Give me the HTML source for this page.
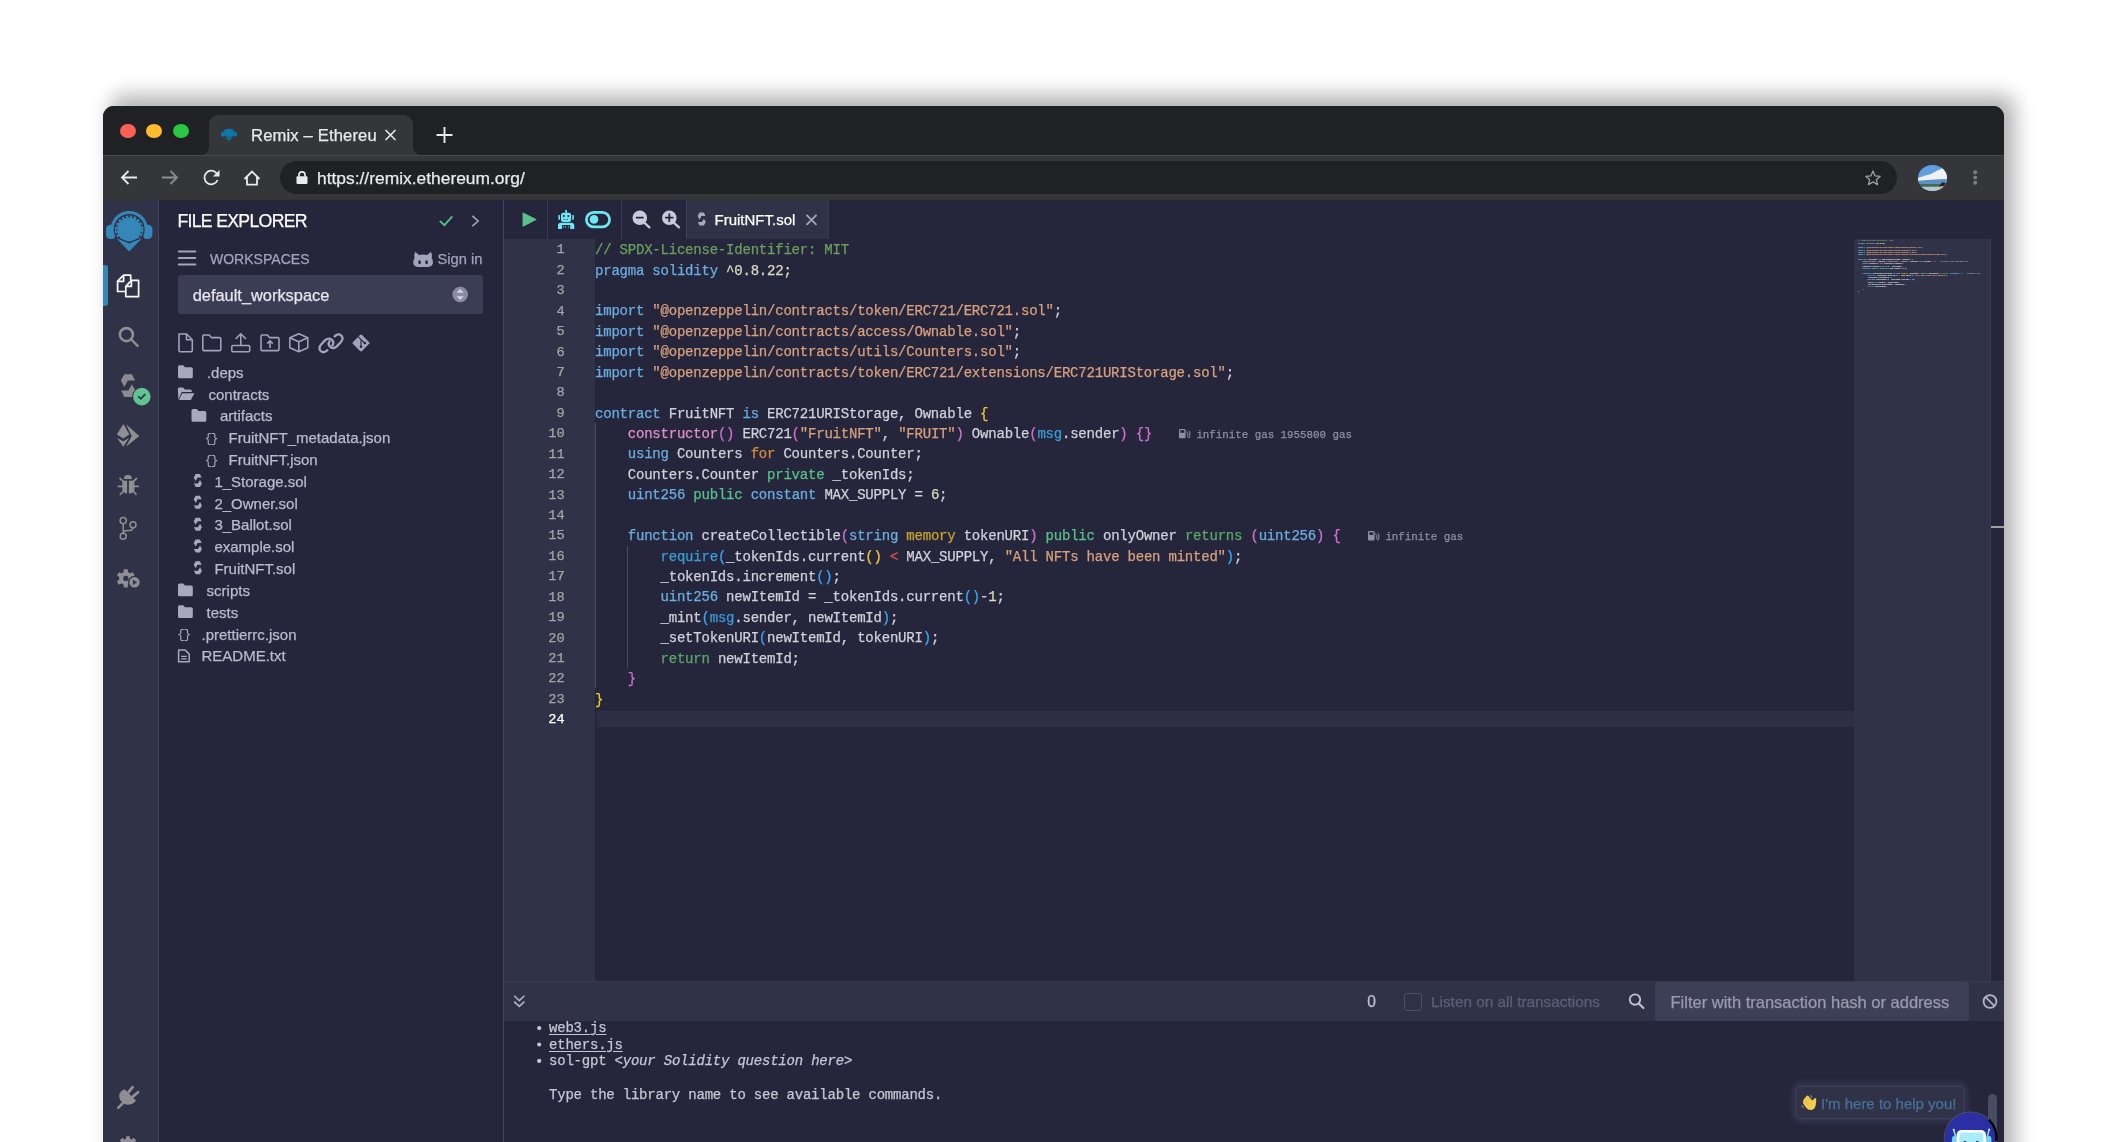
<!DOCTYPE html>
<html><head><meta charset="utf-8">
<style>
*{box-sizing:border-box;margin:0;padding:0}
html,body{width:2108px;height:1142px;overflow:hidden;background:#fff;font-family:'Liberation Sans',sans-serif}
.abs{position:absolute}
#win{position:absolute;left:103px;top:106px;width:1901px;height:1100px;border-radius:11px 11px 0 0;background:#202124;box-shadow:9.4px -10px 20px 0.9px rgba(0,0,0,0.30);overflow:hidden}
#pg{position:absolute;left:-103px;top:-106px;width:2108px;height:1250px;will-change:transform}
.t{position:absolute;white-space:pre;line-height:1;-webkit-text-stroke:0.25px currentColor}
svg.ov{position:absolute;left:0;top:0}
</style></head>
<body>
<div id="win"><div id="pg">
<div class="abs" style="left:103px;top:106px;width:1901px;height:49px;background:#202124;"></div>
<div class="abs" style="left:120px;top:123.99999999999999px;width:16px;height:14.4px;border-radius:50%;background:#fe5f57"></div>
<div class="abs" style="left:146.3px;top:123.99999999999999px;width:16px;height:14.4px;border-radius:50%;background:#febc2e"></div>
<div class="abs" style="left:172.8px;top:123.99999999999999px;width:16px;height:14.4px;border-radius:50%;background:#28c840"></div>
<div class="abs" style="left:209px;top:115px;width:204px;height:41px;background:#35363a;border-radius:9px 9px 0 0"></div>
<div class="abs" style="left:201px;top:147px;width:8px;height:8px;background:radial-gradient(circle at 0 0,#202124 7.5px,#35363a 8.2px);"></div>
<div class="abs" style="left:413px;top:147px;width:8px;height:8px;background:radial-gradient(circle at 100% 0,#202124 7.5px,#35363a 8.2px);"></div>
<div class="abs" style="left:103px;top:155px;width:1901px;height:1px;background:#47484c;"></div>
<div class="abs" style="left:103px;top:156px;width:1901px;height:44px;background:#35363a;"></div>
<div class="abs" style="left:280px;top:161px;width:1617px;height:33px;background:#202124;border-radius:17px"></div>
<div class="t" style="left:251.00px;top:127.94px;font-size:16.6px;color:#e8eaed;font-family:'Liberation Sans',sans-serif;letter-spacing:0.15px">Remix – Ethereu</div>
<div class="t" style="left:317.00px;top:169.57px;font-size:17.4px;color:#e8eaed;font-family:'Liberation Sans',sans-serif;">https://remix.ethereum.org/</div>
<div class="abs" style="left:1918px;top:164.6px;width:29.2px;height:26.4px;border-radius:50%;overflow:hidden"><svg width="29.2" height="26.4" viewBox="1918 164.6 29.2 26.4" style="display:block">
 <rect x="1917" y="164" width="31" height="28" fill="#5f9fe0"/>
 <path d="M1917 178 Q1924 175 1931 173.5 Q1937 170 1943 167.5 L1948 168 V181 H1917 Z" fill="#eef0f6"/>
 <path d="M1917 180.5 Q1930 179 1948 178.5 V185 H1917 Z" fill="#5f8ec4"/>
 <path d="M1917 183.5 H1948 V186.6 H1917 Z" fill="#3f6d52"/>
 <path d="M1917 186.4 H1948 V192 H1917 Z" fill="#b9c6d8"/>
 <path d="M1937 192 L1939.5 186 Q1942 183 1945 184 L1948 192 Z" fill="#d9a582"/>
 <path d="M1939 186 L1942 181.8 L1946 182.6 L1944 185.5 Z" fill="#222228"/>
</svg></div>
<div class="abs" style="left:103px;top:200px;width:55px;height:1000px;background:#303248;"></div>
<div class="abs" style="left:158px;top:200px;width:1px;height:1000px;background:#41435a;"></div>
<div class="abs" style="left:159px;top:200px;width:344px;height:1000px;background:#25263c;"></div>
<div class="abs" style="left:503px;top:200px;width:1px;height:1000px;background:#43455c;"></div>
<div class="abs" style="left:504px;top:200px;width:1500px;height:1000px;background:#25263c;"></div>
<div class="abs" style="left:504px;top:239px;width:91px;height:742px;background:#303248;"></div>
<div class="abs" style="left:504px;top:981px;width:1500px;height:40px;background:#303248;"></div>
<div class="abs" style="left:103px;top:265px;width:5px;height:41px;background:#3587b8;border-radius:0 3px 3px 0"></div>
<div class="t" style="left:177.40px;top:212.61px;font-size:17.7px;color:#ffffff;font-family:'Liberation Sans',sans-serif;letter-spacing:-0.7px">FILE EXPLORER</div>
<div class="t" style="left:209.90px;top:251.90px;font-size:14.05px;color:#a2a3bd;font-family:'Liberation Sans',sans-serif;">WORKSPACES</div>
<div class="t" style="left:437.50px;top:251.95px;font-size:14.7px;color:#a2a3bd;font-family:'Liberation Sans',sans-serif;">Sign in</div>
<div class="abs" style="left:178px;top:275px;width:305px;height:39px;background:#3b3d54;border-radius:3px"></div>
<div class="t" style="left:192.70px;top:286.51px;font-size:16.4px;color:#e6e6ef;font-family:'Liberation Sans',sans-serif;">default_workspace</div>
<div class="t" style="left:206.90px;top:364.80px;font-size:15px;color:#babbcc;font-family:'Liberation Sans',sans-serif;">.deps</div>
<div class="t" style="left:208.50px;top:386.61px;font-size:15px;color:#babbcc;font-family:'Liberation Sans',sans-serif;">contracts</div>
<div class="t" style="left:220.00px;top:408.42px;font-size:15px;color:#babbcc;font-family:'Liberation Sans',sans-serif;">artifacts</div>
<div class="t" style="left:228.50px;top:430.23px;font-size:15px;color:#babbcc;font-family:'Liberation Sans',sans-serif;">FruitNFT_metadata.json</div>
<div class="t" style="left:228.50px;top:452.04px;font-size:15px;color:#babbcc;font-family:'Liberation Sans',sans-serif;">FruitNFT.json</div>
<div class="t" style="left:214.40px;top:473.85px;font-size:15px;color:#babbcc;font-family:'Liberation Sans',sans-serif;">1_Storage.sol</div>
<div class="t" style="left:214.40px;top:495.66px;font-size:15px;color:#babbcc;font-family:'Liberation Sans',sans-serif;">2_Owner.sol</div>
<div class="t" style="left:214.40px;top:517.47px;font-size:15px;color:#babbcc;font-family:'Liberation Sans',sans-serif;">3_Ballot.sol</div>
<div class="t" style="left:214.40px;top:539.28px;font-size:15px;color:#babbcc;font-family:'Liberation Sans',sans-serif;">example.sol</div>
<div class="t" style="left:214.40px;top:561.09px;font-size:15px;color:#babbcc;font-family:'Liberation Sans',sans-serif;">FruitNFT.sol</div>
<div class="t" style="left:206.60px;top:582.90px;font-size:15px;color:#babbcc;font-family:'Liberation Sans',sans-serif;">scripts</div>
<div class="t" style="left:206.60px;top:604.71px;font-size:15px;color:#babbcc;font-family:'Liberation Sans',sans-serif;">tests</div>
<div class="t" style="left:201.50px;top:626.52px;font-size:15px;color:#babbcc;font-family:'Liberation Sans',sans-serif;">.prettierrc.json</div>
<div class="t" style="left:201.50px;top:648.33px;font-size:15px;color:#babbcc;font-family:'Liberation Sans',sans-serif;">README.txt</div>
<div class="abs" style="left:547px;top:200px;width:1px;height:39px;background:#383a50;"></div>
<div class="abs" style="left:621px;top:200px;width:1px;height:39px;background:#383a50;"></div>
<div class="abs" style="left:686px;top:200px;width:142px;height:39px;background:#303248;"></div>
<div class="abs" style="left:686px;top:200px;width:1px;height:39px;background:#3e4057;"></div>
<div class="abs" style="left:828px;top:200px;width:1px;height:39px;background:#3a3c52;"></div>
<div class="t" style="left:714.50px;top:212.40px;font-size:15px;color:#ffffff;font-family:'Liberation Sans',sans-serif;">FruitNFT.sol</div>
<div class="abs" style="left:596.6px;top:710.8px;width:1257px;height:16.2px;background:#2e2f45;"></div>
<div class="abs" style="left:594.8px;top:423px;width:1px;height:265px;background:#4a4b55;"></div>
<div class="abs" style="left:627.2px;top:546px;width:1px;height:121.5px;background:#4a4b55;"></div>
<div class="t" style="left:556.41px;top:243.46px;font-size:13.63px;color:#a4a4aa;font-family:'Liberation Mono',monospace;letter-spacing:0px">1</div>
<div class="t" style="left:595.00px;top:243.17px;font-size:14px;color:#d0d1dc;font-family:'Liberation Mono',monospace;letter-spacing:-0.21px"><span style="color:#6ba05b">// SPDX-License-Identifier: MIT</span></div>
<div class="t" style="left:556.41px;top:263.89px;font-size:13.63px;color:#a4a4aa;font-family:'Liberation Mono',monospace;letter-spacing:0px">2</div>
<div class="t" style="left:595.00px;top:263.60px;font-size:14px;color:#d0d1dc;font-family:'Liberation Mono',monospace;letter-spacing:-0.21px"><span style="color:#6aaee0">pragma</span><span style="color:#d0d1dc"> </span><span style="color:#6aaee0">solidity</span><span style="color:#dcdcc0"> ^0.8.22;</span></div>
<div class="t" style="left:556.41px;top:284.32px;font-size:13.63px;color:#a4a4aa;font-family:'Liberation Mono',monospace;letter-spacing:0px">3</div>
<div class="t" style="left:556.41px;top:304.75px;font-size:13.63px;color:#a4a4aa;font-family:'Liberation Mono',monospace;letter-spacing:0px">4</div>
<div class="t" style="left:595.00px;top:304.46px;font-size:14px;color:#d0d1dc;font-family:'Liberation Mono',monospace;letter-spacing:-0.21px"><span style="color:#6aaee0">import</span><span style="color:#d0d1dc"> </span><span style="color:#d8a07e">&quot;@openzeppelin/contracts/token/ERC721/ERC721.sol&quot;</span><span style="color:#d0d1dc">;</span></div>
<div class="t" style="left:556.41px;top:325.18px;font-size:13.63px;color:#a4a4aa;font-family:'Liberation Mono',monospace;letter-spacing:0px">5</div>
<div class="t" style="left:595.00px;top:324.89px;font-size:14px;color:#d0d1dc;font-family:'Liberation Mono',monospace;letter-spacing:-0.21px"><span style="color:#6aaee0">import</span><span style="color:#d0d1dc"> </span><span style="color:#d8a07e">&quot;@openzeppelin/contracts/access/Ownable.sol&quot;</span><span style="color:#d0d1dc">;</span></div>
<div class="t" style="left:556.41px;top:345.61px;font-size:13.63px;color:#a4a4aa;font-family:'Liberation Mono',monospace;letter-spacing:0px">6</div>
<div class="t" style="left:595.00px;top:345.32px;font-size:14px;color:#d0d1dc;font-family:'Liberation Mono',monospace;letter-spacing:-0.21px"><span style="color:#6aaee0">import</span><span style="color:#d0d1dc"> </span><span style="color:#d8a07e">&quot;@openzeppelin/contracts/utils/Counters.sol&quot;</span><span style="color:#d0d1dc">;</span></div>
<div class="t" style="left:556.41px;top:366.04px;font-size:13.63px;color:#a4a4aa;font-family:'Liberation Mono',monospace;letter-spacing:0px">7</div>
<div class="t" style="left:595.00px;top:365.75px;font-size:14px;color:#d0d1dc;font-family:'Liberation Mono',monospace;letter-spacing:-0.21px"><span style="color:#6aaee0">import</span><span style="color:#d0d1dc"> </span><span style="color:#d8a07e">&quot;@openzeppelin/contracts/token/ERC721/extensions/ERC721URIStorage.sol&quot;</span><span style="color:#d0d1dc">;</span></div>
<div class="t" style="left:556.41px;top:386.47px;font-size:13.63px;color:#a4a4aa;font-family:'Liberation Mono',monospace;letter-spacing:0px">8</div>
<div class="t" style="left:556.41px;top:406.90px;font-size:13.63px;color:#a4a4aa;font-family:'Liberation Mono',monospace;letter-spacing:0px">9</div>
<div class="t" style="left:595.00px;top:406.61px;font-size:14px;color:#d0d1dc;font-family:'Liberation Mono',monospace;letter-spacing:-0.21px"><span style="color:#6aaee0">contract</span><span style="color:#d0d1dc"> FruitNFT </span><span style="color:#6aaee0">is</span><span style="color:#d0d1dc"> ERC721URIStorage, Ownable </span><span style="color:#f0c830">{</span></div>
<div class="t" style="left:548.22px;top:427.33px;font-size:13.63px;color:#a4a4aa;font-family:'Liberation Mono',monospace;letter-spacing:0px">10</div>
<div class="t" style="left:595.00px;top:427.04px;font-size:14px;color:#d0d1dc;font-family:'Liberation Mono',monospace;letter-spacing:-0.21px"><span style="color:#d0d1dc">    </span><span style="color:#e08fc8">constructor</span><span style="color:#d070d0">()</span><span style="color:#d0d1dc"> ERC721</span><span style="color:#d070d0">(</span><span style="color:#d8a07e">&quot;FruitNFT&quot;</span><span style="color:#d0d1dc">, </span><span style="color:#d8a07e">&quot;FRUIT&quot;</span><span style="color:#d070d0">)</span><span style="color:#d0d1dc"> Ownable</span><span style="color:#d070d0">(</span><span style="color:#3b9dd6">msg</span><span style="color:#d0d1dc">.sender</span><span style="color:#d070d0">)</span><span style="color:#d0d1dc"> </span><span style="color:#d070d0">{}</span></div>
<div class="t" style="left:548.22px;top:447.76px;font-size:13.63px;color:#a4a4aa;font-family:'Liberation Mono',monospace;letter-spacing:0px">11</div>
<div class="t" style="left:595.00px;top:447.47px;font-size:14px;color:#d0d1dc;font-family:'Liberation Mono',monospace;letter-spacing:-0.21px"><span style="color:#d0d1dc">    </span><span style="color:#6aaee0">using</span><span style="color:#d0d1dc"> Counters </span><span style="color:#d98a3c">for</span><span style="color:#d0d1dc"> Counters.Counter;</span></div>
<div class="t" style="left:548.22px;top:468.19px;font-size:13.63px;color:#a4a4aa;font-family:'Liberation Mono',monospace;letter-spacing:0px">12</div>
<div class="t" style="left:595.00px;top:467.90px;font-size:14px;color:#d0d1dc;font-family:'Liberation Mono',monospace;letter-spacing:-0.21px"><span style="color:#d0d1dc">    Counters.Counter </span><span style="color:#58c08a">private</span><span style="color:#d0d1dc"> _tokenIds;</span></div>
<div class="t" style="left:548.22px;top:488.62px;font-size:13.63px;color:#a4a4aa;font-family:'Liberation Mono',monospace;letter-spacing:0px">13</div>
<div class="t" style="left:595.00px;top:488.33px;font-size:14px;color:#d0d1dc;font-family:'Liberation Mono',monospace;letter-spacing:-0.21px"><span style="color:#d0d1dc">    </span><span style="color:#6aaee0">uint256</span><span style="color:#d0d1dc"> </span><span style="color:#58c08a">public</span><span style="color:#d0d1dc"> </span><span style="color:#6aaee0">constant</span><span style="color:#d0d1dc"> MAX_SUPPLY = </span><span style="color:#dcdcc0">6</span><span style="color:#d0d1dc">;</span></div>
<div class="t" style="left:548.22px;top:509.05px;font-size:13.63px;color:#a4a4aa;font-family:'Liberation Mono',monospace;letter-spacing:0px">14</div>
<div class="t" style="left:548.22px;top:529.48px;font-size:13.63px;color:#a4a4aa;font-family:'Liberation Mono',monospace;letter-spacing:0px">15</div>
<div class="t" style="left:595.00px;top:529.19px;font-size:14px;color:#d0d1dc;font-family:'Liberation Mono',monospace;letter-spacing:-0.21px"><span style="color:#d0d1dc">    </span><span style="color:#6aaee0">function</span><span style="color:#d0d1dc"> createCollectible</span><span style="color:#d070d0">(</span><span style="color:#6aaee0">string</span><span style="color:#d0d1dc"> </span><span style="color:#c9a42c">memory</span><span style="color:#d0d1dc"> tokenURI</span><span style="color:#d070d0">)</span><span style="color:#d0d1dc"> </span><span style="color:#58c08a">public</span><span style="color:#d0d1dc"> onlyOwner </span><span style="color:#5aa86a">returns</span><span style="color:#d0d1dc"> </span><span style="color:#d070d0">(</span><span style="color:#6aaee0">uint256</span><span style="color:#d070d0">)</span><span style="color:#d0d1dc"> </span><span style="color:#d070d0">{</span></div>
<div class="t" style="left:548.22px;top:549.91px;font-size:13.63px;color:#a4a4aa;font-family:'Liberation Mono',monospace;letter-spacing:0px">16</div>
<div class="t" style="left:595.00px;top:549.62px;font-size:14px;color:#d0d1dc;font-family:'Liberation Mono',monospace;letter-spacing:-0.21px"><span style="color:#d0d1dc">        </span><span style="color:#3b9dd6">require</span><span style="color:#3ea4f0">(</span><span style="color:#d0d1dc">_tokenIds.current</span><span style="color:#f0c830">()</span><span style="color:#d0d1dc"> </span><span style="color:#e05040">&lt;</span><span style="color:#d0d1dc"> MAX_SUPPLY, </span><span style="color:#d8a07e">&quot;All NFTs have been minted&quot;</span><span style="color:#3ea4f0">)</span><span style="color:#d0d1dc">;</span></div>
<div class="t" style="left:548.22px;top:570.34px;font-size:13.63px;color:#a4a4aa;font-family:'Liberation Mono',monospace;letter-spacing:0px">17</div>
<div class="t" style="left:595.00px;top:570.05px;font-size:14px;color:#d0d1dc;font-family:'Liberation Mono',monospace;letter-spacing:-0.21px"><span style="color:#d0d1dc">        _tokenIds.increment</span><span style="color:#3ea4f0">()</span><span style="color:#d0d1dc">;</span></div>
<div class="t" style="left:548.22px;top:590.77px;font-size:13.63px;color:#a4a4aa;font-family:'Liberation Mono',monospace;letter-spacing:0px">18</div>
<div class="t" style="left:595.00px;top:590.48px;font-size:14px;color:#d0d1dc;font-family:'Liberation Mono',monospace;letter-spacing:-0.21px"><span style="color:#d0d1dc">        </span><span style="color:#6aaee0">uint256</span><span style="color:#d0d1dc"> newItemId = _tokenIds.current</span><span style="color:#3ea4f0">()</span><span style="color:#d0d1dc">-</span><span style="color:#dcdcc0">1</span><span style="color:#d0d1dc">;</span></div>
<div class="t" style="left:548.22px;top:611.20px;font-size:13.63px;color:#a4a4aa;font-family:'Liberation Mono',monospace;letter-spacing:0px">19</div>
<div class="t" style="left:595.00px;top:610.91px;font-size:14px;color:#d0d1dc;font-family:'Liberation Mono',monospace;letter-spacing:-0.21px"><span style="color:#d0d1dc">        _mint</span><span style="color:#3ea4f0">(</span><span style="color:#3b9dd6">msg</span><span style="color:#d0d1dc">.sender, newItemId</span><span style="color:#3ea4f0">)</span><span style="color:#d0d1dc">;</span></div>
<div class="t" style="left:548.22px;top:631.63px;font-size:13.63px;color:#a4a4aa;font-family:'Liberation Mono',monospace;letter-spacing:0px">20</div>
<div class="t" style="left:595.00px;top:631.34px;font-size:14px;color:#d0d1dc;font-family:'Liberation Mono',monospace;letter-spacing:-0.21px"><span style="color:#d0d1dc">        _setTokenURI</span><span style="color:#3ea4f0">(</span><span style="color:#d0d1dc">newItemId, tokenURI</span><span style="color:#3ea4f0">)</span><span style="color:#d0d1dc">;</span></div>
<div class="t" style="left:548.22px;top:652.06px;font-size:13.63px;color:#a4a4aa;font-family:'Liberation Mono',monospace;letter-spacing:0px">21</div>
<div class="t" style="left:595.00px;top:651.77px;font-size:14px;color:#d0d1dc;font-family:'Liberation Mono',monospace;letter-spacing:-0.21px"><span style="color:#d0d1dc">        </span><span style="color:#5aa86a">return</span><span style="color:#d0d1dc"> newItemId;</span></div>
<div class="t" style="left:548.22px;top:672.49px;font-size:13.63px;color:#a4a4aa;font-family:'Liberation Mono',monospace;letter-spacing:0px">22</div>
<div class="t" style="left:595.00px;top:672.20px;font-size:14px;color:#d0d1dc;font-family:'Liberation Mono',monospace;letter-spacing:-0.21px"><span style="color:#d0d1dc">    </span><span style="color:#d070d0">}</span></div>
<div class="t" style="left:548.22px;top:692.92px;font-size:13.63px;color:#a4a4aa;font-family:'Liberation Mono',monospace;letter-spacing:0px">23</div>
<div class="t" style="left:595.00px;top:692.63px;font-size:14px;color:#d0d1dc;font-family:'Liberation Mono',monospace;letter-spacing:-0.21px"><span style="color:#f0c830">}</span></div>
<div class="t" style="left:548.22px;top:713.35px;font-size:13.63px;color:#ffffff;font-family:'Liberation Mono',monospace;letter-spacing:0px">24</div>
<div class="t" style="left:1196.40px;top:429.50px;font-size:10.8px;color:#8e8fa6;font-family:'Liberation Mono',monospace;">infinite gas 1955800 gas</div>
<div class="t" style="left:1385.40px;top:531.65px;font-size:10.8px;color:#8e8fa6;font-family:'Liberation Mono',monospace;">infinite gas</div>
<div class="abs" style="left:1854px;top:239px;width:137px;height:742px;background:#303248;"></div>
<div class="abs" style="left:1990px;top:239px;width:1px;height:742px;background:#383a50;"></div>
<div class="abs" style="left:1991px;top:526px;width:13px;height:2px;background:#a0a0a0;"></div>
<div class="abs" style="left:1858px;top:239.5px;transform:scale(0.13919,0.11209);transform-origin:0 0;font-family:'Liberation Mono',monospace;font-size:13.68px;line-height:20.43px;font-weight:bold;-webkit-text-stroke:0.6px currentColor"><div style="height:20.43px;white-space:pre"><span style="color:#6ba05b">// SPDX-License-Identifier: MIT</span></div><div style="height:20.43px;white-space:pre"><span style="color:#6aaee0">pragma</span><span style="color:#d0d1dc"> </span><span style="color:#6aaee0">solidity</span><span style="color:#dcdcc0"> ^0.8.22;</span></div><div style="height:20.43px;white-space:pre"> </div><div style="height:20.43px;white-space:pre"><span style="color:#6aaee0">import</span><span style="color:#d0d1dc"> </span><span style="color:#d8a07e">&quot;@openzeppelin/contracts/token/ERC721/ERC721.sol&quot;</span><span style="color:#d0d1dc">;</span></div><div style="height:20.43px;white-space:pre"><span style="color:#6aaee0">import</span><span style="color:#d0d1dc"> </span><span style="color:#d8a07e">&quot;@openzeppelin/contracts/access/Ownable.sol&quot;</span><span style="color:#d0d1dc">;</span></div><div style="height:20.43px;white-space:pre"><span style="color:#6aaee0">import</span><span style="color:#d0d1dc"> </span><span style="color:#d8a07e">&quot;@openzeppelin/contracts/utils/Counters.sol&quot;</span><span style="color:#d0d1dc">;</span></div><div style="height:20.43px;white-space:pre"><span style="color:#6aaee0">import</span><span style="color:#d0d1dc"> </span><span style="color:#d8a07e">&quot;@openzeppelin/contracts/token/ERC721/extensions/ERC721URIStorage.sol&quot;</span><span style="color:#d0d1dc">;</span></div><div style="height:20.43px;white-space:pre"> </div><div style="height:20.43px;white-space:pre"><span style="color:#6aaee0">contract</span><span style="color:#d0d1dc"> FruitNFT </span><span style="color:#6aaee0">is</span><span style="color:#d0d1dc"> ERC721URIStorage, Ownable </span><span style="color:#f0c830">{</span></div><div style="height:20.43px;white-space:pre"><span style="color:#d0d1dc">    </span><span style="color:#e08fc8">constructor</span><span style="color:#d070d0">()</span><span style="color:#d0d1dc"> ERC721</span><span style="color:#d070d0">(</span><span style="color:#d8a07e">&quot;FruitNFT&quot;</span><span style="color:#d0d1dc">, </span><span style="color:#d8a07e">&quot;FRUIT&quot;</span><span style="color:#d070d0">)</span><span style="color:#d0d1dc"> Ownable</span><span style="color:#d070d0">(</span><span style="color:#3b9dd6">msg</span><span style="color:#d0d1dc">.sender</span><span style="color:#d070d0">)</span><span style="color:#d0d1dc"> </span><span style="color:#d070d0">{}</span><span style="color:#8e8fa6">    infinite gas 1955800 gas</span></div><div style="height:20.43px;white-space:pre"><span style="color:#d0d1dc">    </span><span style="color:#6aaee0">using</span><span style="color:#d0d1dc"> Counters </span><span style="color:#d98a3c">for</span><span style="color:#d0d1dc"> Counters.Counter;</span></div><div style="height:20.43px;white-space:pre"><span style="color:#d0d1dc">    Counters.Counter </span><span style="color:#58c08a">private</span><span style="color:#d0d1dc"> _tokenIds;</span></div><div style="height:20.43px;white-space:pre"><span style="color:#d0d1dc">    </span><span style="color:#6aaee0">uint256</span><span style="color:#d0d1dc"> </span><span style="color:#58c08a">public</span><span style="color:#d0d1dc"> </span><span style="color:#6aaee0">constant</span><span style="color:#d0d1dc"> MAX_SUPPLY = </span><span style="color:#dcdcc0">6</span><span style="color:#d0d1dc">;</span></div><div style="height:20.43px;white-space:pre"> </div><div style="height:20.43px;white-space:pre"><span style="color:#d0d1dc">    </span><span style="color:#6aaee0">function</span><span style="color:#d0d1dc"> createCollectible</span><span style="color:#d070d0">(</span><span style="color:#6aaee0">string</span><span style="color:#d0d1dc"> </span><span style="color:#c9a42c">memory</span><span style="color:#d0d1dc"> tokenURI</span><span style="color:#d070d0">)</span><span style="color:#d0d1dc"> </span><span style="color:#58c08a">public</span><span style="color:#d0d1dc"> onlyOwner </span><span style="color:#5aa86a">returns</span><span style="color:#d0d1dc"> </span><span style="color:#d070d0">(</span><span style="color:#6aaee0">uint256</span><span style="color:#d070d0">)</span><span style="color:#d0d1dc"> </span><span style="color:#d070d0">{</span><span style="color:#8e8fa6">    infinite gas</span></div><div style="height:20.43px;white-space:pre"><span style="color:#d0d1dc">        </span><span style="color:#3b9dd6">require</span><span style="color:#3ea4f0">(</span><span style="color:#d0d1dc">_tokenIds.current</span><span style="color:#f0c830">()</span><span style="color:#d0d1dc"> </span><span style="color:#e05040">&lt;</span><span style="color:#d0d1dc"> MAX_SUPPLY, </span><span style="color:#d8a07e">&quot;All NFTs have been minted&quot;</span><span style="color:#3ea4f0">)</span><span style="color:#d0d1dc">;</span></div><div style="height:20.43px;white-space:pre"><span style="color:#d0d1dc">        _tokenIds.increment</span><span style="color:#3ea4f0">()</span><span style="color:#d0d1dc">;</span></div><div style="height:20.43px;white-space:pre"><span style="color:#d0d1dc">        </span><span style="color:#6aaee0">uint256</span><span style="color:#d0d1dc"> newItemId = _tokenIds.current</span><span style="color:#3ea4f0">()</span><span style="color:#d0d1dc">-</span><span style="color:#dcdcc0">1</span><span style="color:#d0d1dc">;</span></div><div style="height:20.43px;white-space:pre"><span style="color:#d0d1dc">        _mint</span><span style="color:#3ea4f0">(</span><span style="color:#3b9dd6">msg</span><span style="color:#d0d1dc">.sender, newItemId</span><span style="color:#3ea4f0">)</span><span style="color:#d0d1dc">;</span></div><div style="height:20.43px;white-space:pre"><span style="color:#d0d1dc">        _setTokenURI</span><span style="color:#3ea4f0">(</span><span style="color:#d0d1dc">newItemId, tokenURI</span><span style="color:#3ea4f0">)</span><span style="color:#d0d1dc">;</span></div><div style="height:20.43px;white-space:pre"><span style="color:#d0d1dc">        </span><span style="color:#5aa86a">return</span><span style="color:#d0d1dc"> newItemId;</span></div><div style="height:20.43px;white-space:pre"><span style="color:#d0d1dc">    </span><span style="color:#d070d0">}</span></div><div style="height:20.43px;white-space:pre"><span style="color:#f0c830">}</span></div></div>
<div class="abs" style="left:504px;top:981px;width:1500px;height:1px;background:#383a51;"></div>
<div class="t" style="left:1367.20px;top:994.39px;font-size:15.6px;color:#c0c1d2;font-family:'Liberation Sans',sans-serif;">0</div>
<div class="abs" style="left:1403.5px;top:993px;width:18.5px;height:18px;background:#2f3147;border:1.5px solid #4d4f66;border-radius:3px"></div>
<div class="t" style="left:1431.00px;top:994.20px;font-size:15.35px;color:#5d5f78;font-family:'Liberation Sans',sans-serif;">Listen on all transactions</div>
<div class="abs" style="left:1654.5px;top:982px;width:314px;height:38.6px;background:#3d3f56;border-radius:3px"></div>
<div class="t" style="left:1670.50px;top:993.53px;font-size:16.5px;color:#9a9bb0;font-family:'Liberation Sans',sans-serif;">Filter with transaction hash or address</div>
<div class="t" style="left:549.00px;top:1021.27px;font-size:14px;color:#c6c7d4;font-family:'Liberation Mono',monospace;text-decoration:underline;text-underline-offset:2px;letter-spacing:-0.21px">web3.js</div>
<div class="t" style="left:549.00px;top:1037.67px;font-size:14px;color:#c6c7d4;font-family:'Liberation Mono',monospace;text-decoration:underline;text-underline-offset:2px;letter-spacing:-0.21px">ethers.js</div>
<div class="t" style="left:549.00px;top:1054.07px;font-size:14px;color:#c6c7d4;font-family:'Liberation Mono',monospace;letter-spacing:-0.21px">sol-gpt &lt;<i>your Solidity question here</i>&gt;</div>
<div class="t" style="left:549.00px;top:1088.07px;font-size:14px;color:#c6c7d4;font-family:'Liberation Mono',monospace;letter-spacing:-0.21px">Type the library name to see available commands.</div>
<div class="abs" style="left:1795.8px;top:1085.8px;width:168.6px;height:32.8px;background:#303247;border-radius:4px;box-shadow:0 0 7px 2px rgba(110,115,160,0.32);border:1px solid #3c3e56"></div>
<div class="t" style="left:1821.00px;top:1095.60px;font-size:15px;color:#47709a;font-family:'Liberation Sans',sans-serif;">I&#x27;m here to help you!</div>
<div class="abs" style="left:1988px;top:1094px;width:8.8px;height:60px;background:#4a4c63;border-radius:4.4px"></div>
<svg class="ov" width="2108" height="1142" viewBox="0 0 2108 1142">
<g transform="translate(220.2,125.3) scale(0.335)">
 <path d="M9.5 26 A17.1 17.1 0 0 1 42.9 26" fill="none" stroke="#0b79ad" stroke-width="4.5"/>
 <rect x="3" y="20" width="10" height="14" rx="4" fill="#0b79ad"/><rect x="39.3" y="20" width="10" height="14" rx="4" fill="#0b79ad"/>
 <path d="M13 31 A13.8 13.8 0 1 1 39.4 31 L26.2 36.5 Z" fill="#0b79ad"/>
 <path d="M14 34 L26.2 39 L38.4 34 L26.2 46 Z" fill="#0b79ad"/></g>
<path d="M385.5 130 L395.5 140 M395.5 130 L385.5 140" stroke="#e8eaed" stroke-width="1.6"/>
<path d="M444.5 127 V143 M436.5 135 H452.5" stroke="#e8eaed" stroke-width="1.9"/>
<path d="M137 177.5 H122.5 M128.5 171 L122 177.5 L128.5 184" fill="none" stroke="#e8eaed" stroke-width="1.8"/>
<path d="M162 177.5 H176.5 M170.5 171 L177 177.5 L170.5 184" fill="none" stroke="#8c8d90" stroke-width="1.8"/>
<path d="M216.8 173.5 A6.8 6.8 0 1 0 217.6 180" fill="none" stroke="#e8eaed" stroke-width="1.8"/><path d="M219.5 170 V176.5 H213 Z" fill="#e8eaed"/>
<path d="M244.5 179 L252 171.6 L259.5 179 M247 177 V184.6 H257 V177" fill="none" stroke="#e8eaed" stroke-width="1.8"/>
<path d="M299 176.5 V174.8 A3 3 0 0 1 305 174.8 V176.5" fill="none" stroke="#e8eaed" stroke-width="1.7"/><rect x="296.5" y="176.2" width="11" height="7.8" rx="1" fill="#e8eaed"/>
<path d="M1873 171 L1875.1 175.9 L1880.3 176.3 L1876.3 179.7 L1877.6 184.6 L1873 181.9 L1868.4 184.6 L1869.7 179.7 L1865.7 176.3 L1870.9 175.9 Z" fill="none" stroke="#9aa0a6" stroke-width="1.3" stroke-linejoin="round"/>
<circle cx="1975.2" cy="172.3" r="1.95" fill="#7d7e82"/>
<circle cx="1975.2" cy="177.5" r="1.95" fill="#7d7e82"/>
<circle cx="1975.2" cy="182.7" r="1.95" fill="#7d7e82"/>
<g transform="translate(103,205)">
 <path d="M9.42 21.8 A17 17 0 0 1 42.98 21.8" fill="none" stroke="#3587b8" stroke-width="3.2"/>
 <rect x="3" y="19.8" width="10" height="14.2" rx="4.2" fill="#3587b8"/><rect x="39.4" y="19.8" width="10" height="14.2" rx="4.2" fill="#3587b8"/>
 <circle cx="26.2" cy="24.5" r="14.8" fill="none" stroke="#303248" stroke-width="1.3"/>
 <circle cx="26.2" cy="24.5" r="12" fill="#3587b8"/>
 <circle cx="26.2" cy="24.5" r="13" fill="none" stroke="#3587b8" stroke-width="2.2" stroke-dasharray="2.5 1.6"/>
 <path d="M11.8 31.2 L26.2 36.9 L40.6 31.2 L40.6 42 L26.2 50 L11.8 42 Z" fill="#303248"/>
 <path d="M13.4 33.3 L26.2 38.5 L39 33.3 L26.2 46.4 Z" fill="#3587b8"/>
</g>
<g fill="none" stroke="#ffffff" stroke-width="1.7" stroke-linejoin="round">
 <path d="M125.5 291.5 H117.6 V281.2 L123.6 275.2 H130.7 V280"/>
 <path d="M123.6 275.4 V281.3 H117.7"/>
 <path d="M125.8 286.3 L131.4 280.3 H138.6 V296.6 H125.8 Z"/>
 <path d="M131.4 280.4 V286.3 H125.9"/>
</g>
<circle cx="126.4" cy="334.6" r="6.5" fill="none" stroke="#8f8f93" stroke-width="2.6"/><path d="M131.3 339.5 L137.6 345.8" stroke="#8f8f93" stroke-width="2.4" stroke-linecap="round"/>
<g transform="translate(112,368)" fill="#8f8f93">
 <path d="M12.3 6.3 L20 6.3 L23.1 12.6 L15.8 12.6 L12.4 18.9 L8.9 12.6 Z" opacity="0.95"/>
 <path d="M19.9 16.4 L23.4 22.6 L20 28.9 L12.3 28.9 L9.1 22.6 L16.4 22.6 Z" opacity="0.95"/>
</g>
<circle cx="141.8" cy="396.6" r="9.6" fill="#303248"/><circle cx="141.8" cy="396.6" r="8.8" fill="#62c391"/><path d="M138.3 396.3 L140.8 398.8 L145.3 394.2" fill="none" stroke="#303248" stroke-width="1.7"/>
<g transform="translate(110,418)" fill="#8f8f93">
 <path d="M13.4 6 L19.4 16.6 L13.3 20.5 L6.8 16.6 Z"/>
 <path d="M7 20 L13.3 23.3 L19 20 L13.3 28.8 Z"/>
 <path d="M16 6.3 L29.3 18 L16 28.8 L21.7 18 Z"/>
</g>
<g transform="translate(110,468)">
 <path d="M13.9 10.9 A4 4 0 0 1 21.9 10.9 Z" fill="#8f8f93"/>
 <path d="M12.3 12.8 H17.1 V25.6 Q13.2 25.4 12.4 22 Z" fill="#8f8f93"/>
 <path d="M18.9 12.8 H24.4 V22 Q23.6 25.4 18.9 25.6 Z" fill="#8f8f93"/>
 <path d="M10 10.3 L13.3 13.4 M26.6 10.3 L23.4 13.4 M8.3 18.4 H12.6 M24.2 18.4 H28.2 M10.3 26.3 L13.6 23 M26 26.3 L23.1 23" stroke="#8f8f93" stroke-width="1.7" stroke-linecap="round"/>
</g>
<g transform="translate(110,510)" fill="none" stroke="#8f8f93" stroke-width="1.5">
 <circle cx="13.2" cy="10.6" r="3.1"/><circle cx="23" cy="14.8" r="3"/><circle cx="13.2" cy="26.3" r="3"/>
 <path d="M13.2 13.7 V23.3 M13.4 21.8 Q14.5 20.6 18.5 20.6 Q22.6 20.6 22.9 17.8"/>
</g>
<g transform="translate(110,561)">
 <g fill="#8f8f93">
  <circle cx="15.8" cy="17.4" r="6.6"/>
  <rect x="13.7" y="8.3" width="4.2" height="18.3" rx="0.8"/>
  <rect x="13.7" y="8.3" width="4.2" height="18.3" rx="0.8" transform="rotate(60 15.8 17.4)"/>
  <rect x="13.7" y="8.3" width="4.2" height="18.3" rx="0.8" transform="rotate(-60 15.8 17.4)"/>
 </g>
 <circle cx="15.8" cy="17.4" r="2.6" fill="#303248"/>
 <circle cx="24.5" cy="21.2" r="6.5" fill="#303248"/>
 <circle cx="24.5" cy="21.2" r="5.2" fill="#8f8f93"/>
 <path d="M22.9 18.7 L27.1 21.3 L22.9 23.9 Z" fill="#303248"/>
</g>
<g transform="translate(106,1078)" fill="#8f8f93">
 <path d="M18.6 11.2 L30 22.6 Q27.5 26.5 22.5 26.8 Q18.2 26.8 15.4 23.6 Q12.5 20.2 13.5 16.2 Q14.5 12.8 18.6 11.2 Z"/>
 <path d="M12.2 29.8 L17 25" stroke="#8f8f93" stroke-width="2.6" stroke-linecap="round"/>
 <path d="M22.4 14.4 L26.6 9.2 M26.8 18.6 L32 14.2" stroke="#8f8f93" stroke-width="2.8" stroke-linecap="round"/>
</g>
<g fill="#8f8f93"><circle cx="128" cy="1146" r="7.6"/><rect x="126" y="1136.2" width="4" height="5" rx="0.8"/><rect x="126" y="1136.2" width="4" height="5" rx="0.8" transform="rotate(45 128 1146)"/><rect x="126" y="1136.2" width="4" height="5" rx="0.8" transform="rotate(-45 128 1146)"/></g>
<path d="M439.8 220.8 L444.4 225.2 L452.3 216.4" fill="none" stroke="#4fc283" stroke-width="1.8"/>
<path d="M472.3 215.8 L478.2 221 L472.3 226.2" fill="none" stroke="#a2a3bd" stroke-width="1.6"/>
<path d="M178.8 251.5 H195.3 M178.8 258 H195.3 M178.8 264.5 H195.3" stroke="#a2a3bd" stroke-width="2.1" stroke-linecap="round"/>
<g fill="#a2a3bd">
 <path d="M415.2 251.8 L419 255 Q423.2 253.8 427.2 255 L431 251.8 Q432.6 255.8 431.6 258 Q433 259.8 433 262 Q433 266.5 428 267 H418 Q413.2 266.5 413.2 262 Q413.2 259.8 414.6 258 Q413.6 255.8 415.2 251.8 Z"/>
</g>
<ellipse cx="419.6" cy="262.3" rx="1.3" ry="2" fill="#25263c"/><ellipse cx="426.6" cy="262.3" rx="1.3" ry="2" fill="#25263c"/>
<circle cx="460.2" cy="294.5" r="7.8" fill="#8b8ca3"/><path d="M456.6 292.8 L460.2 289 L463.8 292.8 Z M456.6 296.2 L460.2 300 L463.8 296.2 Z" fill="#d4d5e0"/>
<g fill="none" stroke="#a2a3bd" stroke-width="1.55" stroke-linejoin="round">
 <path d="M179 334 H186.5 L192.3 339.8 V350.6 Q192.3 351.8 191 351.8 H180.2 Q179 351.8 179 350.6 Z"/><path d="M186.5 334 V339.8 H192.3"/>
 <path d="M202.8 336.2 Q202.8 335 204 335 H209.2 L211.3 337.6 H219.6 Q220.8 337.6 220.8 338.8 V349.4 Q220.8 350.6 219.6 350.6 H204 Q202.8 350.6 202.8 349.4 Z"/>
 <path d="M240.8 334 V346 M235.6 339 L240.8 333.8 L246 339"/><rect x="231.8" y="345.4" width="17.9" height="6.4" rx="1.2"/>
 <path d="M261 336.2 Q261 335 262.2 335 H267.4 L269.5 337.6 H277.8 Q279 337.6 279 338.8 V349.4 Q279 350.6 277.8 350.6 H262.2 Q261 350.6 261 349.4 Z"/><path d="M270 348 V341 M267.2 343.6 L270 340.8 L272.8 343.6"/>
 <path d="M298.8 333.8 L307.8 337.8 V347.8 L298.8 351.8 L289.8 347.8 V337.8 Z M289.8 337.8 L298.8 341.8 L307.8 337.8 M298.8 341.8 V351.8"/>
</g>
<g transform="translate(314,328)" fill="none" stroke="#a2a3bd" stroke-width="2.3" stroke-linecap="round">
 <path d="M13.4 22.2 L12 23.3 Q8.5 25.4 6.3 22.6 Q4.2 19.6 7.4 16.2 L11.2 12.2 Q14.4 9.4 17.6 11.6 Q20.6 14 18.4 17.4"/>
 <path d="M20.6 8.4 L22 7.3 Q25.5 5.2 27.7 8 Q29.8 11 26.6 14.4 L22.8 18.4 Q19.6 21.2 16.4 19 Q13.4 16.6 15.6 13.2"/>
</g>
<path d="M361 334.6 Q361.6 334.6 362 335 L369.4 342.4 Q369.9 343 369.4 343.6 L362 351 Q361 351.8 360 351 L352.6 343.6 Q352.1 343 352.6 342.4 L360 335 Q360.4 334.6 361 334.6 Z" fill="#a2a3bd"/>
<path d="M358.2 336.6 L361 339.6 L364.6 343 M361 339.6 V346.6" fill="none" stroke="#25263c" stroke-width="1.1"/>
<circle cx="361" cy="346.8" r="1.25" fill="#25263c"/><circle cx="364.8" cy="343.1" r="1.25" fill="#25263c"/>
<path d="M178 366.8 Q178 365.3 179.5 365.3 H183.2 L185 367.3 H191.3 Q192.8 367.3 192.8 368.8 V376.7 Q192.8 378.2 191.3 378.2 H179.5 Q178 378.2 178 376.7 Z" fill="#a8a9bf"/>
<path d="M177.8 389.01 Q177.8 387.51 179.3 387.51 H183.0 L184.8 389.51 H190.3 Q191.8 389.51 191.8 391.01 V392.11 H181.8 L178.4 400.11 Z" fill="#a8a9bf"/><path d="M182.3 393.31 H194.4 L190.8 400.11 H179.0 Z" fill="#a8a9bf"/>
<path d="M191.5 410.42 Q191.5 408.92 193.0 408.92 H196.7 L198.5 410.92 H204.8 Q206.3 410.92 206.3 412.42 V420.32 Q206.3 421.82 204.8 421.82 H193.0 Q191.5 421.82 191.5 420.32 Z" fill="#a8a9bf"/>
<text x="204.5" y="441.73" font-family="Liberation Mono" font-size="13" fill="#a8a9bf" letter-spacing="-1.5">{}</text>
<text x="204.5" y="463.54" font-family="Liberation Mono" font-size="13" fill="#a8a9bf" letter-spacing="-1.5">{}</text>
<g transform="translate(193.3,474.05) scale(0.56)" fill="#a8a9bf"><path d="M4.2 0 L11.8 0 L14.9 6.2 L7.6 6.2 L4.3 12.6 L0.8 6.2 Z"/><path d="M12 10.8 L15.4 17 L12 23.2 L4.4 23.2 L1 17 L8.3 17 Z"/></g>
<g transform="translate(193.3,495.86) scale(0.56)" fill="#a8a9bf"><path d="M4.2 0 L11.8 0 L14.9 6.2 L7.6 6.2 L4.3 12.6 L0.8 6.2 Z"/><path d="M12 10.8 L15.4 17 L12 23.2 L4.4 23.2 L1 17 L8.3 17 Z"/></g>
<g transform="translate(193.3,517.67) scale(0.56)" fill="#a8a9bf"><path d="M4.2 0 L11.8 0 L14.9 6.2 L7.6 6.2 L4.3 12.6 L0.8 6.2 Z"/><path d="M12 10.8 L15.4 17 L12 23.2 L4.4 23.2 L1 17 L8.3 17 Z"/></g>
<g transform="translate(193.3,539.48) scale(0.56)" fill="#a8a9bf"><path d="M4.2 0 L11.8 0 L14.9 6.2 L7.6 6.2 L4.3 12.6 L0.8 6.2 Z"/><path d="M12 10.8 L15.4 17 L12 23.2 L4.4 23.2 L1 17 L8.3 17 Z"/></g>
<g transform="translate(193.3,561.29) scale(0.56)" fill="#a8a9bf"><path d="M4.2 0 L11.8 0 L14.9 6.2 L7.6 6.2 L4.3 12.6 L0.8 6.2 Z"/><path d="M12 10.8 L15.4 17 L12 23.2 L4.4 23.2 L1 17 L8.3 17 Z"/></g>
<path d="M178 584.9 Q178 583.4 179.5 583.4 H183.2 L185 585.4 H191.3 Q192.8 585.4 192.8 586.9 V594.8 Q192.8 596.3 191.3 596.3 H179.5 Q178 596.3 178 594.8 Z" fill="#a8a9bf"/>
<path d="M178 606.7099999999999 Q178 605.2099999999999 179.5 605.2099999999999 H183.2 L185 607.2099999999999 H191.3 Q192.8 607.2099999999999 192.8 608.7099999999999 V616.6099999999999 Q192.8 618.1099999999999 191.3 618.1099999999999 H179.5 Q178 618.1099999999999 178 616.6099999999999 Z" fill="#a8a9bf"/>
<text x="177.1" y="638.02" font-family="Liberation Mono" font-size="13" fill="#a8a9bf" letter-spacing="-1.5">{}</text>
<path d="M178.6 650.03 H185.1 L189.2 654.13 V661.8299999999999 H178.6 Z" fill="none" stroke="#a8a9bf" stroke-width="1.5" stroke-linejoin="round"/><path d="M181.2 656.43 H186.6 M181.2 658.93 H186.6" stroke="#a8a9bf" stroke-width="1.3"/>
<path d="M523.6 212.8 Q522.6 212.2 522.6 213.4 V225.8 Q522.6 227 523.6 226.4 L536 220 Q537 219.6 536 219 Z" fill="#5cc08c"/>
<g transform="translate(550,204)" fill="#6ee8f4">
 <rect x="15.3" y="6" width="1.7" height="3.6"/>
 <rect x="11" y="8.8" width="10.1" height="9.2" rx="2.2"/>
 <rect x="8.4" y="11" width="1.6" height="4.8" rx="0.6"/><rect x="22.2" y="11" width="1.6" height="4.8" rx="0.6"/>
 <path d="M8 25 V21.5 Q8 18.8 10.8 18.8 H21.4 Q24.2 18.8 24.2 21.5 V25 H20.2 V21 H12 V25 Z"/>
 <rect x="12.8" y="21.8" width="1" height="2.2" opacity="0.6"/><rect x="14.8" y="21.8" width="1" height="2.2" opacity="0.6"/><rect x="17.8" y="21.8" width="1" height="2.2" opacity="0.6"/>
</g>
<circle cx="563.8" cy="216" r="1" fill="#25263c"/><circle cx="568.3" cy="216" r="1" fill="#25263c"/>
<path d="M563.5 219.4 H568.6" stroke="#25263c" stroke-width="0.8" stroke-dasharray="0.9 0.9"/>
<rect x="586.4" y="212.4" width="23.2" height="14.4" rx="7.2" fill="none" stroke="#6ee8f4" stroke-width="2.7"/>
<circle cx="594" cy="219.4" r="4.3" fill="#6ee8f4"/>
<circle cx="639.8" cy="217.8" r="7.3" fill="#c9cad9"/><path d="M644.8 223.2 L649.4 227.4" stroke="#c9cad9" stroke-width="2.3" stroke-linecap="round"/>
<circle cx="669.3" cy="217.8" r="7.3" fill="#c9cad9"/><path d="M674.3 223.2 L678.9 227.4" stroke="#c9cad9" stroke-width="2.3" stroke-linecap="round"/>
<path d="M636.6 217.6 H643" stroke="#25263c" stroke-width="1.8" stroke-linecap="round"/>
<path d="M665.8 217.6 H672.8 M669.3 214.2 V221.2" stroke="#25263c" stroke-width="1.8" stroke-linecap="round"/>
<g transform="translate(697.2,212.6) scale(0.56)" fill="#a8a9bf"><path d="M4.2 0 L11.8 0 L14.9 6.2 L7.6 6.2 L4.3 12.6 L0.8 6.2 Z"/><path d="M12 10.8 L15.4 17 L12 23.2 L4.4 23.2 L1 17 L8.3 17 Z"/></g>
<path d="M806.5 214.8 L816.5 224.8 M816.5 214.8 L806.5 224.8" stroke="#a2a3bd" stroke-width="1.9"/>
<g transform="translate(1179,428.37)" fill="#8e8fa6">
 <rect x="0" y="0.6" width="6.6" height="9.4" rx="1.2"/><rect x="1.3" y="1.8" width="4" height="2.6" fill="#25263c"/>
 <path d="M6.6 3 L8.8 4.6 V8.4 Q8.8 9.4 9.8 9.4 Q10.8 9.4 10.8 8.4 V3.6 L9.4 2.2" fill="none" stroke="#8e8fa6" stroke-width="1"/></g>
<g transform="translate(1368,530.52)" fill="#8e8fa6">
 <rect x="0" y="0.6" width="6.6" height="9.4" rx="1.2"/><rect x="1.3" y="1.8" width="4" height="2.6" fill="#25263c"/>
 <path d="M6.6 3 L8.8 4.6 V8.4 Q8.8 9.4 9.8 9.4 Q10.8 9.4 10.8 8.4 V3.6 L9.4 2.2" fill="none" stroke="#8e8fa6" stroke-width="1"/></g>
<path d="M514.2 995.8 L519.3 1000.6 L524.4 995.8 M514.2 1001.6 L519.3 1006.4 L524.4 1001.6" fill="none" stroke="#b4b5c8" stroke-width="1.5"/>
<circle cx="1635" cy="999.6" r="5.2" fill="none" stroke="#c0c1d2" stroke-width="1.9"/><path d="M1638.8 1003.4 L1643.4 1008" stroke="#c0c1d2" stroke-width="2.1" stroke-linecap="round"/>
<circle cx="1990" cy="1001.5" r="6.4" fill="none" stroke="#b4b5c8" stroke-width="1.8"/><path d="M1985.6 997.1 L1994.4 1005.9" stroke="#b4b5c8" stroke-width="1.8"/>
<circle cx="539.2" cy="1028.1" r="2.1" fill="#c6c7d4"/>
<circle cx="539.2" cy="1044.5" r="2.1" fill="#c6c7d4"/>
<circle cx="539.2" cy="1060.9" r="2.1" fill="#c6c7d4"/>
<g transform="translate(1796,1090)">
 <path d="M7.1 13.6 Q6.6 11.2 7.8 9.2 L10.6 5.9 Q11.6 5.2 12.6 6.2 L14.4 8.6 L16.6 10.6 L18.4 8.4 Q19.6 7.4 20.2 8.8 Q20.4 12 19.6 15.4 Q18.8 19.2 15.4 20 Q12.2 20.4 10 17.4 Z" fill="#f5cd4e"/>
 <path d="M8.2 11.2 L12.4 15.6 M8.6 9 L13.4 13.8 M10.2 7.4 L14.4 12" stroke="#d9aa3a" stroke-width="0.7"/>
 <path d="M14.6 5.4 L15.8 7.6 M5.6 15.4 L7.6 17.6" stroke="#70738a" stroke-width="1.3" stroke-linecap="round"/>
</g>
<circle cx="1970.4" cy="1138.2" r="26.6" fill="#7d7a5a" opacity="0.55"/>
<circle cx="1970.4" cy="1138.2" r="25.9" fill="#2a2fa4"/>
<path d="M1988.8 1119.6 A25.9 25.9 0 0 1 1996.2 1141" fill="none" stroke="#000" stroke-width="2.2"/>
<path d="M1953.7 1129.8 L1955.6 1136.5 M1989.2 1129.4 L1987.3 1136.5" stroke="#8fe6fa" stroke-width="1.5"/>
<circle cx="1953.7" cy="1129.8" r="1" fill="#c8f4ff"/><circle cx="1989.2" cy="1129.4" r="1" fill="#c8f4ff"/>
<rect x="1951.9" y="1136" width="5.5" height="12" rx="2.4" fill="#72d6f2"/>
<rect x="1985.6" y="1136" width="5.8" height="12" rx="2.4" fill="#72d6f2"/>
<rect x="1956.6" y="1130" width="29.4" height="20" rx="5" fill="#ffffff"/>
<rect x="1959.4" y="1132.6" width="24" height="14" rx="3" fill="#a8ecfc"/>
<g fill="#ffffff" opacity="0.75"><rect x="1963" y="1136" width="1" height="1"/><rect x="1965" y="1138" width="1" height="1"/><rect x="1967" y="1136" width="1" height="1"/><rect x="1975" y="1135" width="1" height="1"/><rect x="1977" y="1137" width="1" height="1"/></g>
<rect x="1963.6" y="1141" width="2.6" height="2" fill="#2a34a6"/><rect x="1976" y="1141" width="2.6" height="2" fill="#2a34a6"/>
</svg>
</div></div>
</body></html>
